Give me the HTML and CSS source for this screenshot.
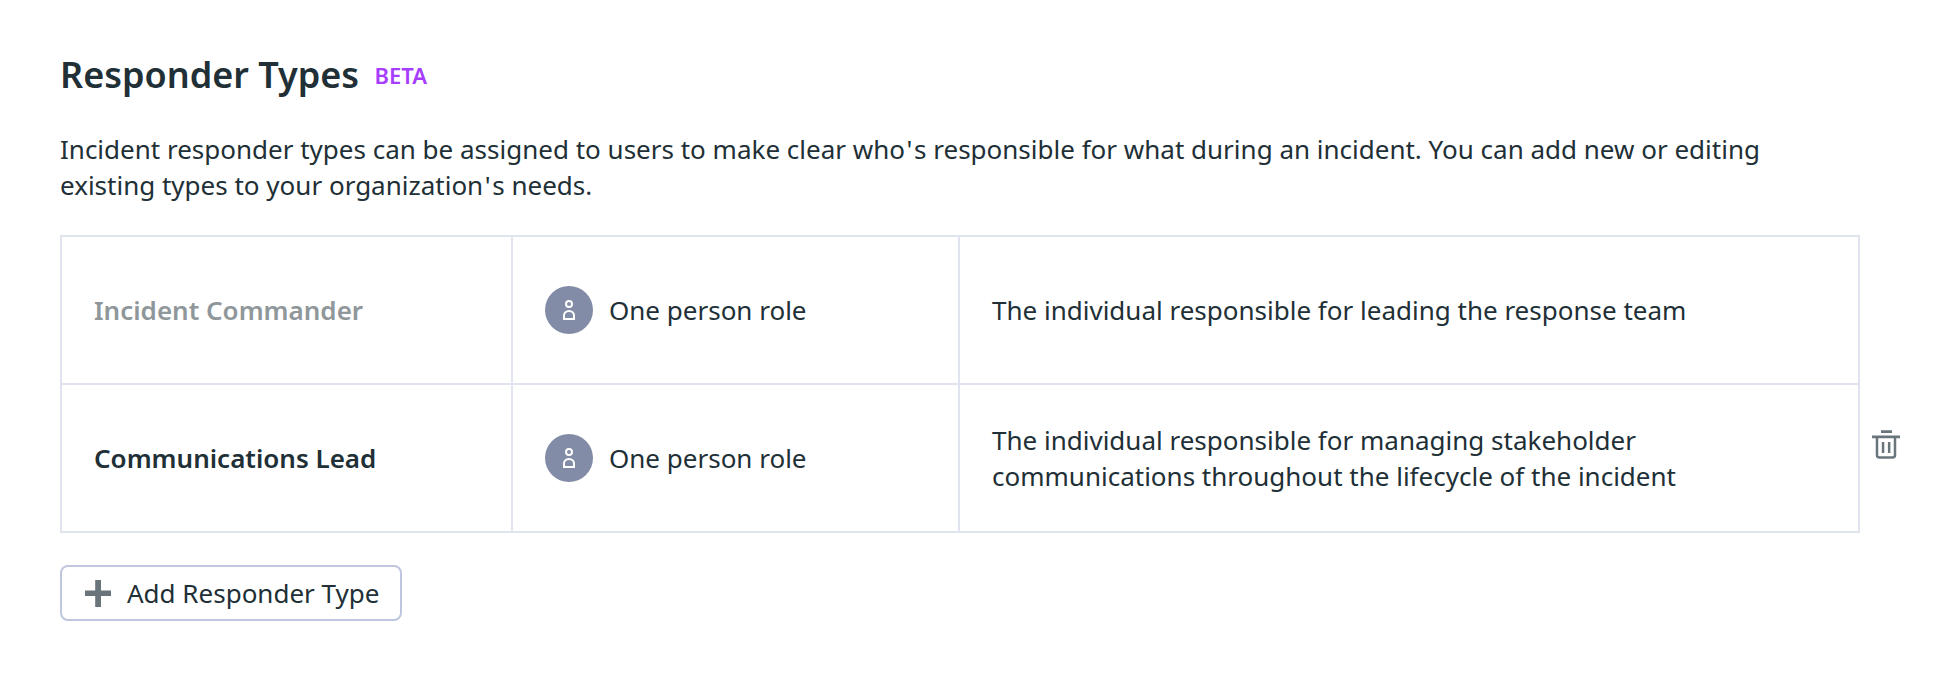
FILE: index.html
```html
<!DOCTYPE html>
<html lang="en">
<head>
<meta charset="utf-8">
<title>Responder Types</title>
<link rel="stylesheet" href="styles.css">
</head>
<body>
<main class="page">
  <header class="heading">
    <h1 class="title">Responder Types</h1>
    <span class="beta">BETA</span>
  </header>
  <p class="intro">Incident responder types can be assigned to users to make clear who<span class="apos">'</span>s responsible for what during an incident. You can add new or editing existing types to your organization<span class="apos">'</span>s needs.</p>
  <div class="list">
    <div class="types">
      <div class="cell name muted">Incident Commander</div>
      <div class="cell role">
        <svg class="avatar" viewBox="0 0 48 48"><circle cx="24" cy="24" r="24" fill="#838ca6"/><g fill="none" stroke="#fff" stroke-width="2"><circle cx="24" cy="18" r="3"/><path d="M19 33v-3.500a5 4.500 0 0 1 10 0V33z"/></g></svg>
        <span>One person role</span>
      </div>
      <div class="cell">The individual responsible for leading the response team</div>
      <div class="cell name">Communications Lead</div>
      <div class="cell role">
        <svg class="avatar" viewBox="0 0 48 48"><circle cx="24" cy="24" r="24" fill="#838ca6"/><g fill="none" stroke="#fff" stroke-width="2"><circle cx="24" cy="18" r="3"/><path d="M19 33v-3.500a5 4.500 0 0 1 10 0V33z"/></g></svg>
        <span>One person role</span>
      </div>
      <div class="cell">The individual responsible for managing stakeholder communications throughout the lifecycle of the incident</div>
    </div>
    <button class="delete" aria-label="Delete">
      <svg class="trash" viewBox="0 0 28 30"><path fill="#69757b" d="M9 .3h11v2.700H9zM0 5.600h28v2.600H0zM9.800 12h2.500v11H9.800zM15.900 12h2.500v11h-2.500z"/><path fill="none" stroke="#69757b" stroke-width="2.500" d="M5 7v18a2.500 2.500 0 0 0 2.500 2.500h13A2.500 2.500 0 0 0 23 25V7"/></svg>
    </button>
  </div>
  <button class="add">
    <svg class="plus" viewBox="0 0 26 27"><path fill="#6a757b" d="M10.200 0h5.800v10.500h10v5.600H16V27h-5.800V16.100H0v-5.600h10.200z"/></svg>
    <span>Add Responder Type</span>
  </button>
</main>
</body>
</html>
```

FILE: styles.css
```css
body {
  margin: 0;
  background: #fff;
  color: #212f36;
  font: 26px/36px "Noto Sans", sans-serif;
}
.page {
  padding: 51px 56px 0 60px;
}
.heading {
  display: flex;
  align-items: center;
  gap: 15.5px;
  height: 48px;
}
.title {
  margin: 0;
  font-size: 36px;
  font-weight: 600;
  line-height: 48px;
}
.beta {
  color: #a63dff;
  font-size: 22px;
  font-weight: 600;
  line-height: 30px;
}
.intro {
  width: 1740px;
  margin: 32px 0;
}
.apos {
  padding: 0 1.6px;
}
.list {
  display: flex;
  align-items: flex-end;
  gap: 12px;
}
.types {
  display: grid;
  grid-template-columns: 449px 445px 898px;
  grid-template-rows: 146px 146px;
  gap: 2px;
  padding: 2px;
  background: #e0e4ef;
}
.cell {
  display: flex;
  align-items: center;
  padding: 0 32px;
  background: #fff;
}
.name {
  font-weight: 600;
}
.muted {
  color: #8f979b;
}
.role {
  gap: 16px;
}
.avatar {
  width: 48px;
  height: 48px;
}
button {
  padding: 0;
  border: 0;
  background: none;
  color: inherit;
  font: inherit;
}
.delete {
  height: 103px;
  display: flex;
}
.trash {
  width: 28px;
  height: 30px;
}
.add {
  display: flex;
  align-items: center;
  box-sizing: border-box;
  width: 342px;
  height: 56px;
  margin-top: 32px;
  padding-left: 23px;
  gap: 16px;
  border: 2px solid #bfc7e0;
  border-radius: 8px;
}
.plus {
  width: 26px;
  height: 27px;
}
```
